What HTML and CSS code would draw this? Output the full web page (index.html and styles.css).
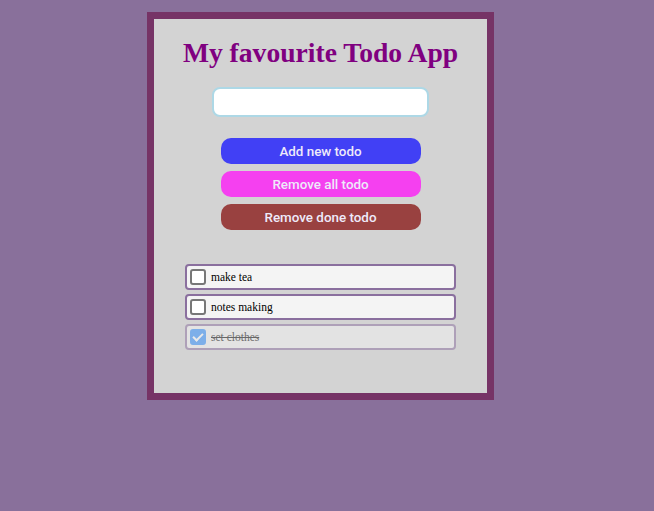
FILE: index.html
```html
<!DOCTYPE html>
<html lang="en">
<head>
    <meta charset="UTF-8">
    <meta name="viewport" content="width=device-width, initial-scale=1.0">
    <title>Todo App</title>
    <link rel="stylesheet" href="styles.css">
</head>
<body>
    <div class="container">
        <h1>My favourite Todo App</h1>
        <input type="text" id="todoInput" class="todo-input">
        <div class="buttons">
            <button class="btn btn-add">Add new todo</button>
            <button class="btn btn-remove-all">Remove all todo</button>
            <button class="btn btn-remove-done">Remove done todo</button>
        </div>
        <ul class="todo-list">
            <li class="todo-item"><input type="checkbox"><span>make tea</span></li>
            <li class="todo-item"><input type="checkbox"><span>notes making</span></li>
            <li class="todo-item done"><input type="checkbox" checked><span>set clothes</span></li>
        </ul>
    </div>
</body>
</html>
```

FILE: styles.css
```css
body {
    margin: 0;
    padding: 12px 0 0 147px;
    background: #89709b;
    font-family: 'Liberation Serif', serif;
}
.container {
    width: 333px;
    height: 374px;
    background: #d3d3d3;
    border: 7px solid #763366;
    display: flex;
    flex-direction: column;
    align-items: center;
}
h1 {
    margin: 18px 0 0;
    color: #800080;
    font-size: 27.6px;
    font-weight: bold;
    line-height: 32px;
}
.todo-input {
    box-sizing: border-box;
    width: 217px;
    height: 30px;
    margin-top: 18px;
    border: 2px solid #add8e6;
    border-radius: 8px;
    background: white;
    outline: none;
}
.buttons {
    display: flex;
    flex-direction: column;
    gap: 7px;
    margin-top: 21px;
}
.btn {
    width: 200px;
    height: 26px;
    padding: 0;
    border: none;
    border-radius: 10px;
    color: #eeeafa;
    font-family: Roboto, 'Liberation Sans', sans-serif;
    font-size: 13.4px;
    font-weight: 500;
    cursor: pointer;
}
.btn-add {
    background: #4140f5;
}
.btn-remove-all {
    background: #f540f0;
}
.btn-remove-done {
    background: #994140;
}
.todo-list {
    list-style: none;
    margin: 34px 0 0;
    padding: 0;
    display: flex;
    flex-direction: column;
    gap: 4px;
}
.todo-item {
    box-sizing: border-box;
    width: 271px;
    height: 26px;
    display: flex;
    align-items: center;
    gap: 5px;
    padding: 0 3px;
    background: #f4f4f4;
    border: 2px solid #8a6f9e;
    border-radius: 4px;
    font-size: 11.5px;
    color: #000;
}
.todo-item input {
    appearance: none;
    box-sizing: border-box;
    width: 16px;
    height: 16px;
    margin: 0;
    border: 2px solid #777;
    border-radius: 3px;
    background: #fff;
    display: grid;
    place-items: center;
}
.todo-item input:checked {
    border-color: #2a8cff;
    background: #2a8cff;
}
.todo-item input:checked::after {
    content: "";
    width: 4px;
    height: 8px;
    margin-top: -2px;
    border: solid #fff;
    border-width: 0 2px 2px 0;
    transform: rotate(45deg);
}
.todo-item.done {
    opacity: 0.5;
}
.todo-item.done span {
    text-decoration: line-through;
}
```
